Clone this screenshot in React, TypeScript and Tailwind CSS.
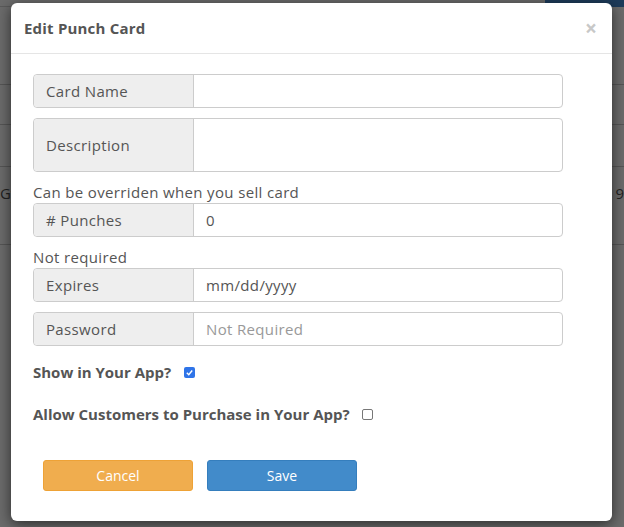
import React, { useState } from "react";

// Field rows for the form
const FIELDS_TOP = [
  { label: "Card Name", value: "", placeholder: "", tall: false },
  { label: "Description", value: "", placeholder: "", tall: true },
];

function AddonRow({
  label,
  value,
  placeholder,
  tall,
}: {
  label: string;
  value: string;
  placeholder?: string;
  tall?: boolean;
}) {
  return (
    <div
      className={`flex w-[530px] rounded border border-[#ccc] ${
        tall ? "h-[54px]" : "h-[34px]"
      }`}
    >
      <div className="flex w-[160px] shrink-0 items-center rounded-l bg-[#eee] border-r border-[#ccc] px-3 text-[15px] tracking-[0.35px] text-[#555]">
        {label}
      </div>
      <div className="flex flex-1 items-center px-3 text-[15px] tracking-[0.35px] text-[#555]">
        {value ? (
          <span>{value}</span>
        ) : (
          <span className="text-[#999]">{placeholder}</span>
        )}
      </div>
    </div>
  );
}

function CheckBox({ checked }: { checked: boolean }) {
  return checked ? (
    <span className="ml-[13px] inline-flex h-[11px] w-[11px] items-center justify-center rounded-[2px] bg-[#2f74e8]">
      <svg width="9" height="9" viewBox="0 0 10 10">
        <path d="M2 5.2 L4.2 7.4 L8 2.8" stroke="white" strokeWidth="1.6" fill="none" />
      </svg>
    </span>
  ) : (
    <span className="ml-[12px] inline-block h-[11px] w-[11px] rounded-[2px] border border-[#777] bg-white" />
  );
}

export default function App() {
  const [showInApp] = useState(true);

  return (
    <div
      className="relative h-[527px] w-[624px] overflow-hidden bg-[#6b6b6b]"
      style={{ fontFamily: '"Open Sans", "Liberation Sans", sans-serif' }}
    >
      {/* dimmed page behind the dialog */}
      <div className="absolute inset-0 text-[15px] text-[#222]">
        <div className="flex h-[7px] items-end text-[#2a2a2a]">
          <div className="h-full w-[545px] border-b border-[#5a5a5a]" />
          <div className="h-full flex-1 bg-[#1d3b5a]" />
        </div>
        <div className="h-[78px] border-b border-[#555]" />
        <div className="h-[40px] border-b border-[#555]" />
        <div className="h-[42px] border-b border-[#555]" />
        <div className="flex h-[78px] items-start justify-between border-b border-[#555] pt-[15px]">
          <span>Gy</span>
          <span>9</span>
        </div>
      </div>

      <div className="relative ml-[11px] mt-[3px] flex h-[518px] w-[601px] flex-col rounded-md bg-white shadow-[0_3px_14px_rgba(0,0,0,0.6)]">
        <div className="flex h-[51px] items-center justify-between border-b border-[#e5e5e5] pl-[13px] pr-[15px]">
          <h4 className="text-[15px] font-bold tracking-[0.2px] text-[#555]">Edit Punch Card</h4>
          <span className="text-[21px] font-bold leading-none text-[#c8c8c8]">×</span>
        </div>

        <div className="flex flex-col pl-[22px] pt-[20px]">
          <div className="flex flex-col gap-[10px]">
            {FIELDS_TOP.map((f) => (
              <AddonRow key={f.label} label={f.label} value={f.value} tall={f.tall} />
            ))}
          </div>

          <p className="mt-[9px] h-[22px] text-[15px] leading-[22px] tracking-[0.35px] text-[#555]">
            Can be overriden when you sell card
          </p>
          <AddonRow label="# Punches" value="0" />

          <p className="mt-[9px] h-[22px] text-[15px] leading-[22px] tracking-[0.35px] text-[#555]">
            Not required
          </p>
          <div className="flex flex-col gap-[10px]">
            <AddonRow label="Expires" value="mm/dd/yyyy" />
            <AddonRow label="Password" value="" placeholder="Not Required" />
          </div>

          <label className="mt-[16px] flex h-[20px] items-center text-[15px] font-bold text-[#555]">
            Show in Your App?
            <CheckBox checked={showInApp} />
          </label>
          <label className="mt-[22px] flex h-[20px] items-center text-[15px] font-bold text-[#555]">
            Allow Customers to Purchase in Your App?
            <CheckBox checked={false} />
          </label>

          <div className="mt-[36px] flex gap-[14px] pl-[10px]">
            <button className="h-[31px] w-[150px] rounded-[3px] border border-[#eea236] bg-[#f0ad4e] text-[14px] text-white">
              Cancel
            </button>
            <button className="h-[31px] w-[150px] rounded-[3px] border border-[#357ebd] bg-[#428bca] text-[14px] text-white">
              Save
            </button>
          </div>
        </div>
      </div>
    </div>
  );
}
